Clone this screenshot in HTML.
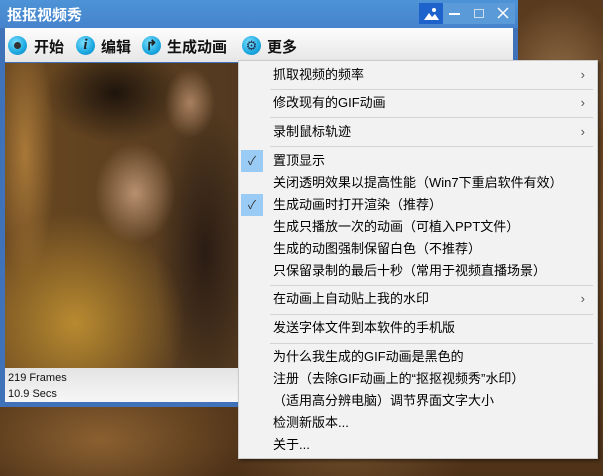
<!DOCTYPE html>
<html><head><meta charset="utf-8"><style>
*{margin:0;padding:0;box-sizing:border-box}
body{width:603px;height:476px;overflow:hidden;position:relative;font-family:"Liberation Sans","Noto Sans CJK SC",sans-serif;
background:radial-gradient(ellipse 60px 80px at 560px 80px,#8a6a45,transparent),radial-gradient(ellipse 120px 60px at 350px 450px,#6a4a28,transparent),radial-gradient(ellipse 140px 70px at 100px 440px,#8a6030,transparent),linear-gradient(180deg,#5a3a1e,#6e4a26 50%,#4e3218);}
.win{position:absolute;left:0;top:0;width:518px;height:407px;background:#3f72b8;}
.title{position:absolute;left:0;top:0;width:518px;height:28px;background:linear-gradient(#4d93d6,#4683cc);}
.title span{position:absolute;left:7px;top:4px;color:#fff;font-size:15px;font-weight:bold;}
.tb{position:absolute;top:3px;height:21px;width:24px;background:#5a9ad8;}
.tool{position:absolute;left:5px;top:28px;width:508px;height:34px;background:linear-gradient(#fdfdfd,#e6e6e6);}
.tool .b{position:absolute;top:8px;font-size:15px;font-weight:bold;color:#111;}
.ic{position:absolute;top:8px;width:19px;height:19px;border-radius:50%;background:radial-gradient(circle at 40% 35%,#7de0ff,#1ba8e0 60%,#0b7fb8);}
.video{position:absolute;left:5px;top:63px;width:508px;height:305px;background:
radial-gradient(ellipse 40px 50px at 130px 130px,#b89070,transparent),
radial-gradient(ellipse 25px 35px at 185px 40px,#a88060,transparent),
radial-gradient(ellipse 70px 50px at 110px 30px,#1e140c,transparent),
radial-gradient(ellipse 110px 110px at 70px 260px,#b88a30,transparent),
radial-gradient(ellipse 50px 150px at 200px 190px,#2a1c14,transparent),
radial-gradient(ellipse 30px 130px at 20px 90px,#a87838,transparent),
linear-gradient(90deg,#6a4820,#4a3420 60%,#3a2a1c);}
.status{position:absolute;left:5px;top:368px;width:508px;height:34px;background:linear-gradient(#e4e4e4,#f6f6f6);font-size:11px;color:#111;}
.menu{position:absolute;left:238px;top:60px;width:360px;height:399px;background:#f2f2f2;border:1px solid #ccc;box-shadow:2px 2px 3px rgba(0,0,0,.4);font-size:13px;color:#000;}
.it{position:absolute;left:34px;white-space:nowrap;line-height:16px;}
.sep{position:absolute;left:31px;right:4px;height:1px;background:#d4d4d4;}
.ar{position:absolute;right:12px;font-size:13px;color:#555;}
.ck{position:absolute;left:2px;width:22px;height:22px;background:#99cbf5;color:#333;font-size:12px;text-align:center;line-height:22px;}
</style></head><body>
<div class="win">
<div class="title"><span>抠抠视频秀</span>
<div class="tb" style="left:419px;background:#1e62cc"><svg width="24" height="21"><circle cx="15" cy="7" r="2" fill="#fff"/><path d="M5 17 L10 10 L13 14 L16 11 L20 17Z" fill="#fff"/></svg></div>
<div class="tb" style="left:443px"><div style="position:absolute;left:6px;top:10px;width:11px;height:2px;background:#fff"></div></div>
<div class="tb" style="left:467px"><div style="position:absolute;left:7px;top:6px;width:10px;height:9px;border:1px solid #cde"></div></div>
<div class="tb" style="left:491px"><svg width="24" height="21"><path d="M7 5 L17 15 M17 5 L7 15" stroke="#fff" stroke-width="1.5"/></svg></div>
</div>
<div class="tool">
<div class="ic" style="left:3px"><div style="position:absolute;left:6px;top:6px;width:7px;height:7px;border-radius:50%;background:#333"></div></div><div class="b" style="left:29px">开始</div>
<div class="ic" style="left:71px;color:#222;font:italic bold 15px 'Liberation Serif';text-align:center;line-height:19px">i</div><div class="b" style="left:96px">编辑</div>
<div class="ic" style="left:137px;color:#222;font-weight:bold;font-size:14px;text-align:center;line-height:19px">↱</div><div class="b" style="left:162px">生成动画</div>
<div class="ic" style="left:237px;color:#235;font-size:13px;text-align:center;line-height:19px">⚙</div><div class="b" style="left:262px">更多</div>
</div>
<div class="video"></div>
<div class="status"><div style="position:absolute;left:3px;top:4px">219 Frames</div><div style="position:absolute;left:3px;top:20px">10.9 Secs</div></div>
</div>
<div class="menu">
<div class="it" style="top:6px">抓取视频的频率</div><div class="ar" style="top:6px">›</div>
<div class="sep" style="top:28px"></div>
<div class="it" style="top:34px">修改现有的GIF动画</div><div class="ar" style="top:34px">›</div>
<div class="sep" style="top:56px"></div>
<div class="it" style="top:63px">录制鼠标轨迹</div><div class="ar" style="top:63px">›</div>
<div class="sep" style="top:85px"></div>
<div class="ck" style="top:89px">✓</div>
<div class="it" style="top:92px">置顶显示</div>
<div class="it" style="top:114px">关闭透明效果以提高性能（Win7下重启软件有效）</div>
<div class="ck" style="top:133px">✓</div>
<div class="it" style="top:136px">生成动画时打开渲染（推荐）</div>
<div class="it" style="top:158px">生成只播放一次的动画（可植入PPT文件）</div>
<div class="it" style="top:180px">生成的动图强制保留白色（不推荐）</div>
<div class="it" style="top:202px">只保留录制的最后十秒（常用于视频直播场景）</div>
<div class="sep" style="top:224px"></div>
<div class="it" style="top:230px">在动画上自动贴上我的水印</div><div class="ar" style="top:230px">›</div>
<div class="sep" style="top:253px"></div>
<div class="it" style="top:259px">发送字体文件到本软件的手机版</div>
<div class="sep" style="top:282px"></div>
<div class="it" style="top:288px">为什么我生成的GIF动画是黑色的</div>
<div class="it" style="top:310px">注册（去除GIF动画上的“抠抠视频秀”水印）</div>
<div class="it" style="top:332px">（适用高分辨电脑）调节界面文字大小</div>
<div class="it" style="top:354px">检测新版本...</div>
<div class="it" style="top:376px">关于...</div>
</div>
</body></html>
